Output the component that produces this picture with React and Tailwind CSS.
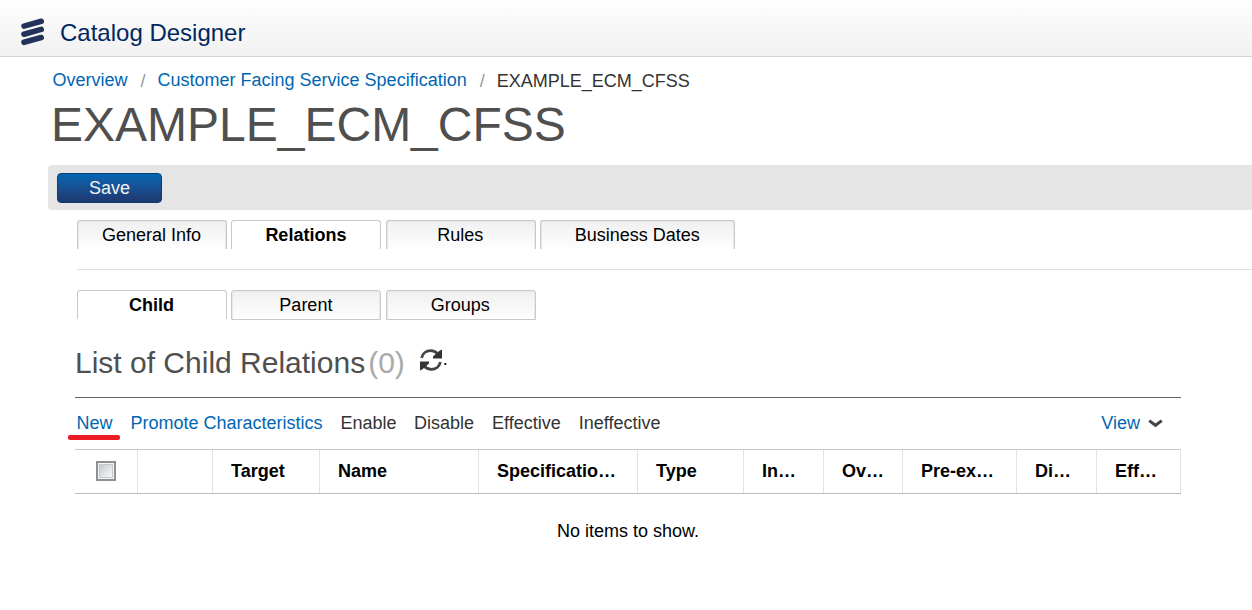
const mainTabs = [
  { label: "General Info", width: "w-[150px]" },
  { label: "Relations", width: "w-[150px]", active: true },
  { label: "Rules", width: "w-[150px]" },
  { label: "Business Dates", width: "w-[195px]" },
];

const subTabs = [
  { label: "Child", width: "w-[150px]", active: true },
  { label: "Parent", width: "w-[150px]", closed: true },
  { label: "Groups", width: "w-[150px]", closed: true },
];

const columns = ["Target", "Name", "Specificatio…", "Type", "In…", "Ov…", "Pre-ex…", "Di…", "Eff…"];

function Tabs({ items }) {
  return (
    <div className="flex h-[30px] items-start gap-[4.4px]">
      {items.map((t) => (
        <div
          key={t.label}
          className={`${t.width} flex justify-center rounded-t-[3px] border border-[#c9c9c9] pr-px leading-7 ${
            t.active ? "bg-white font-bold" : "bg-linear-to-b from-[#f0f0f0] to-[#fefefe] shadow-[inset_1px_1px_0_#e8e8e8,inset_-1px_0_0_#e8e8e8]"
          } ${t.closed ? "h-[30px]" : "h-[29px] border-b-0"}`}
        >
          {t.label}
        </div>
      ))}
    </div>
  );
}

function Logo() {
  return (
    <svg className="ml-5 h-[30px] w-[26px]" viewBox="0 0 26 30" fill="none" stroke="#22325a" strokeWidth="5.6" strokeLinecap="round">
      <path d="M4 9.1 21.2 4.3M4 17.2 21.2 12.4M4 25.3 21.2 20.5" />
    </svg>
  );
}

function Refresh() {
  return (
    <svg className="ml-[15px] mt-[8px] h-[22px] w-[22px]" viewBox="0 0 22 22">
      <g fill="none" stroke="#444" strokeWidth="2.8">
        <path d="M1.6 9C2.6 4.4 6.3 1.7 10.6 1.7c3 0 5.2 1 7.3 3.3" />
        <path d="M20.4 13c-1 4.6-4.7 7.3-9 7.3-3 0-5.2-1-7.3-3.3" />
      </g>
      <path fill="#333" d="M22 .5V9.4H13L13 7.6 19.5 1.8ZM0 21.5V12.6H9L9 14.4 2.5 20.2Z" />
    </svg>
  );
}

export default function App() {
  return (
    <div className="h-[610px] w-[1252px] overflow-hidden bg-white font-['Liberation_Sans',Arial,sans-serif] text-[18px] leading-6 text-black">
      <header className="flex h-[57px] items-center border-b border-[#d4d4d4] bg-linear-to-b from-[#fefefe] to-[#f1f1f1] pt-[7px]">
        <Logo />
        <span className="ml-3.5 pt-0.5 text-2xl text-[#00285f]">Catalog Designer</span>
      </header>

      <nav className="flex h-[39px] items-start pl-[52.5px] pt-[11px] text-[#0066b3]">
        <a>Overview</a>
        <span className="ml-[13px] mt-px text-[#999]">/</span>
        <a className="ml-[12px]">Customer Facing Service Specification</a>
        <span className="ml-[13px] mt-px text-[#999]">/</span>
        <span className="ml-[12px] mt-px text-[#333]">EXAMPLE_ECM_CFSS</span>
      </nav>
      <h1 className="h-[69px] pl-[51px] text-5xl leading-[58px] text-[#4f4f4f]">EXAMPLE_ECM_CFSS</h1>

      <div className="ml-12 h-[45px] rounded-l bg-[#e5e5e5] pl-[9px] pt-2">
        <button className="block h-[30px] w-[105px] rounded-[4px] border border-[#133a70] bg-linear-to-b from-[#0066b3] to-[#1d3870] text-[#f2f2f2] leading-7">
          Save
        </button>
      </div>

      <div className="pl-[77px] pt-2.5">
        <Tabs items={mainTabs} />
        <div className="mt-[19px] border-t border-[#dedede] pt-5">
          <Tabs items={subTabs} />
        </div>
      </div>

      <main className="ml-[75px] w-[1106px]">
        <div className="flex h-[78px] items-start border-b border-[#666] pt-[21px]">
          <h2 className="text-[30px] leading-[44px] text-[#4f4f4f]">List of Child Relations</h2>
          <span className="ml-[3px] text-[30px] leading-[44px] text-[#aaa]">(0)</span>
          <Refresh />
          <span className="ml-px mt-[6px] leading-6">.</span>
        </div>
        <div className="flex h-[51px] items-start gap-[18px] pl-[1.4px] pt-[13px] text-[#333]">
          <a className="relative text-[#0066b3]">
            New
            <span className="absolute -left-[8.4px] top-[24px] h-[5px] w-[52px] rounded-[2px] bg-[#ed1c24]" />
          </a>
          <a className="text-[#0066b3]">Promote Characteristics</a>
          <span>Enable</span>
          <span className="-ml-[0.5px]">Disable</span>
          <span>Effective</span>
          <span>Ineffective</span>
          <a className="ml-auto text-[#0066b3]">View</a>
          <svg className="-ml-2.5 mr-[18px] mt-[8px] h-[9px] w-[15px]" viewBox="0 0 15 9" fill="none" stroke="#444" strokeWidth="3">
            <path d="m1.2 1.6 6.3 4.7 6.3-4.7" />
          </svg>
        </div>
        <div className="grid h-[45px] grid-cols-[63px_75px_107px_159px_159px_106px_80px_79px_114px_80px_84px] border-b border-t border-b-[#b9bcc5] border-t-[#c9c9c9] font-bold leading-[42px]">
          <div className="border-r border-[#e2e2e2] pl-[21px] pt-[11px]">
            <div className="h-5 w-5 border-2 border-[#8e8f8f] bg-[#f4f4f4] p-px">
              <div className="h-3.5 w-3.5 border border-[#c4c8cd] bg-linear-to-br from-[#c8ccd3] to-[#f6f6f6]" />
            </div>
          </div>
          <div className="border-r border-[#e2e2e2]" />
          {columns.map((c) => (
            <div key={c} className="overflow-hidden whitespace-nowrap border-r border-[#e2e2e2] pl-[18px]">
              {c}
            </div>
          ))}
        </div>
        <p className="pt-[25px] text-center">No items to show.</p>
      </main>
    </div>
  );
}
